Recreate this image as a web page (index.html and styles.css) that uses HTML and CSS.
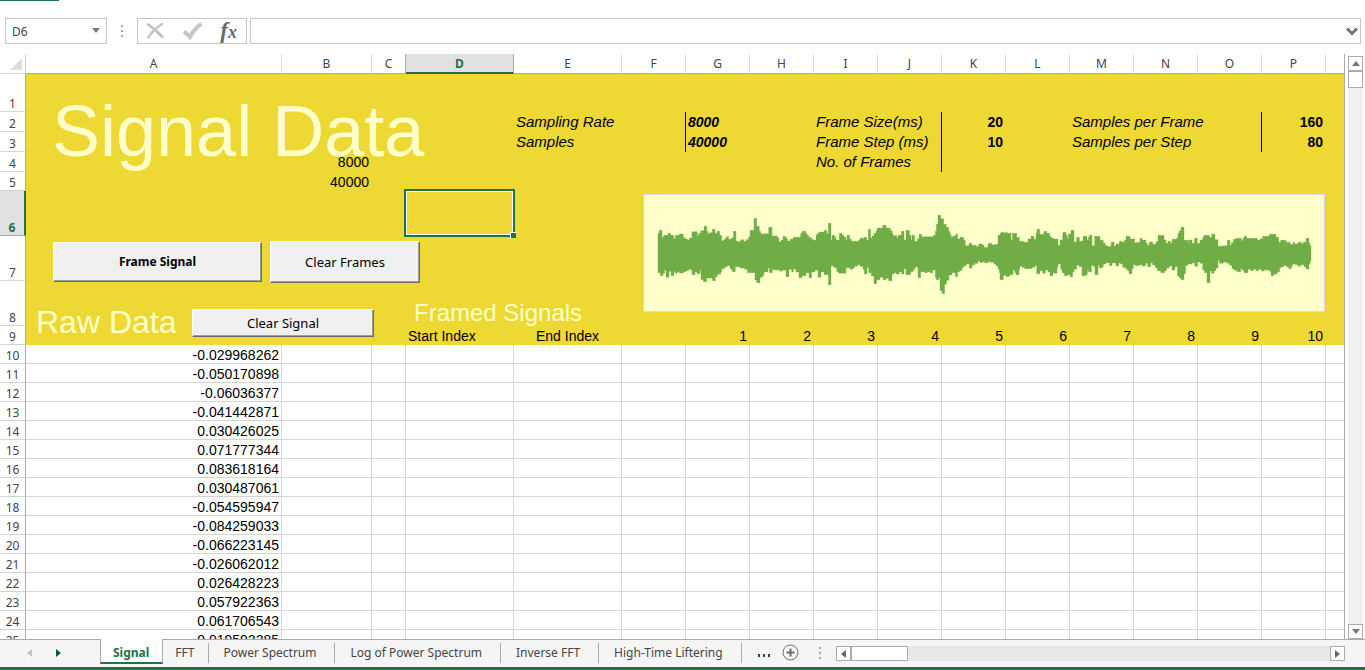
FILE: index.html
```html
<!DOCTYPE html>
<html lang="en">
<head>
<meta charset="utf-8">
<title>Signal Data</title>
<link rel="stylesheet" href="styles.css">
</head>
<body>
<div class="ribbon-edge"><span class="ribbon-tab"></span></div>

<header class="formula-bar">
  <div class="name-box">
    <input class="name-input" type="text" value="D6" aria-label="Name box">
    <button class="plain-btn" aria-label="Show names"><svg width="8" height="5" viewBox="0 0 8 5"><path d="M0 0h8L4 5z" fill="#777"/></svg></button>
  </div>
  <svg class="grip" width="2" height="12" viewBox="0 0 2 12" fill="#a6a6a6"><path d="M0 0h2v2H0zM0 5h2v2H0zM0 10h2v2H0z"/></svg>
  <div class="formula-tools">
    <button class="plain-btn" aria-label="Cancel"><svg width="20" height="20" viewBox="0 0 20 20" fill="none" stroke="#c3c3c3"><path d="M2 3C8 6 12 11 18 16.500" stroke-width="3"/><path d="M18 2.500C12 6 6 11 3 17.500" stroke-width="2.400"/></svg></button>
    <button class="plain-btn" aria-label="Enter"><svg width="20" height="20" viewBox="0 0 20 20" fill="none" stroke="#c6c6c6"><path d="M1 10.500L7 16C9.500 11 13.500 6 18.500 3" stroke-width="4"/></svg></button>
    <button class="plain-btn fx" aria-label="Insert function"><span class="fx-f">f</span><span class="fx-x">x</span></button>
  </div>
  <div class="formula-field">
    <input class="formula-input" type="text" aria-label="Formula">
    <button class="plain-btn" aria-label="Expand formula bar"><svg width="12" height="9" viewBox="0 0 12 9" fill="none" stroke="#737373" stroke-width="3"><path d="M1 1.500l5 5 5-5"/></svg></button>
  </div>
</header>

<main class="workspace">
  <div class="sheet">
    <table class="grid">
      <colgroup>
        <col class="w-head"><col class="w-a"><col class="w-b"><col class="w-c"><col class="w-de"><col class="w-de">
        <col class="w-n"><col class="w-n"><col class="w-n"><col class="w-n"><col class="w-n"><col class="w-n"><col class="w-n"><col class="w-n"><col class="w-n"><col class="w-n"><col class="w-n"><col>
      </colgroup>
      <thead>
        <tr><th class="corner"><svg width="12" height="12" viewBox="0 0 12 12"><path d="M12 0v12H0z" fill="#dedede"/></svg></th><th>A</th><th>B</th><th>C</th><th class="active">D</th><th>E</th><th>F</th><th>G</th><th>H</th><th>I</th><th>J</th><th>K</th><th>L</th><th>M</th><th>N</th><th>O</th><th>P</th><th class="last"></th></tr>
      </thead>
      <tbody class="panel">
        <tr class="r1"><th>1</th><td colspan="17"></td></tr>
        <tr class="r20"><th>2</th><td></td><td></td><td></td><td></td><td class="label">Sampling Rate</td><td class="rule"></td><td class="left strong label-num">8000</td><td></td><td class="label">Frame Size(ms)</td><td class="rule"></td><td class="strong">20</td><td></td><td class="label">Samples per Frame</td><td></td><td class="rule"></td><td class="strong">160</td><td></td></tr>
        <tr class="r20"><th>3</th><td></td><td></td><td></td><td></td><td class="label">Samples</td><td class="rule"></td><td class="left strong label-num">40000</td><td></td><td class="label">Frame Step (ms)</td><td class="rule"></td><td class="strong">10</td><td></td><td class="label">Samples per Step</td><td></td><td class="rule"></td><td class="strong">80</td><td></td></tr>
        <tr class="r20"><th>4</th><td></td><td>8000</td><td></td><td></td><td></td><td></td><td></td><td></td><td class="label">No. of Frames</td><td class="rule"></td><td></td><td></td><td></td><td></td><td></td><td></td><td></td></tr>
        <tr class="r19"><th>5</th><td></td><td>40000</td><td></td><td></td><td colspan="13"></td></tr>
        <tr class="r45"><th class="active">6</th><td></td><td></td><td></td><td class="selected"><span class="selection"><span class="handle"></span></span></td><td colspan="13"></td></tr>
        <tr class="r45"><th>7</th><td colspan="17"></td></tr>
        <tr class="r45"><th>8</th><td colspan="17"></td></tr>
        <tr class="r19"><th>9</th><td></td><td></td><td></td><td class="left">Start Index</td><td class="center">End Index</td><td></td><td>1</td><td>2</td><td>3</td><td>4</td><td>5</td><td>6</td><td>7</td><td>8</td><td>9</td><td>10</td><td></td></tr>
      </tbody>
      <tbody>
        <tr><th>10<td>-0.029968262<td><td><td><td><td><td><td><td><td><td><td><td><td><td><td></tr>
        <tr><th>11<td>-0.050170898<td><td><td><td><td><td><td><td><td><td><td><td><td><td><td></tr>
        <tr><th>12<td>-0.06036377<td><td><td><td><td><td><td><td><td><td><td><td><td><td><td></tr>
        <tr><th>13<td>-0.041442871<td><td><td><td><td><td><td><td><td><td><td><td><td><td><td></tr>
        <tr><th>14<td>0.030426025<td><td><td><td><td><td><td><td><td><td><td><td><td><td><td></tr>
        <tr><th>15<td>0.071777344<td><td><td><td><td><td><td><td><td><td><td><td><td><td><td></tr>
        <tr><th>16<td>0.083618164<td><td><td><td><td><td><td><td><td><td><td><td><td><td><td></tr>
        <tr><th>17<td>0.030487061<td><td><td><td><td><td><td><td><td><td><td><td><td><td><td></tr>
        <tr><th>18<td>-0.054595947<td><td><td><td><td><td><td><td><td><td><td><td><td><td><td></tr>
        <tr><th>19<td>-0.084259033<td><td><td><td><td><td><td><td><td><td><td><td><td><td><td></tr>
        <tr><th>20<td>-0.066223145<td><td><td><td><td><td><td><td><td><td><td><td><td><td><td></tr>
        <tr><th>21<td>-0.026062012<td><td><td><td><td><td><td><td><td><td><td><td><td><td><td></tr>
        <tr><th>22<td>0.026428223<td><td><td><td><td><td><td><td><td><td><td><td><td><td><td></tr>
        <tr><th>23<td>0.057922363<td><td><td><td><td><td><td><td><td><td><td><td><td><td><td></tr>
        <tr><th>24<td>0.061706543<td><td><td><td><td><td><td><td><td><td><td><td><td><td><td></tr>
        <tr><th>25<td>0.019592285<td><td><td><td><td><td><td><td><td><td><td><td><td><td><td></tr>
      </tbody>
    </table>

    <h1 class="shape title">Signal Data</h1>
    <h2 class="shape raw-title">Raw Data</h2>
    <h2 class="shape framed-title">Framed Signals</h2>
    <button class="shape macro frame-signal">Frame Signal</button>
    <button class="shape macro clear-frames">Clear Frames</button>
    <button class="shape macro clear-signal">Clear Signal</button>
    <svg class="shape chart" viewBox="9 12 2046 354" role="img" aria-label="Signal waveform">
      <rect x="10.500" y="13.500" width="2043" height="351" fill="#ffffcc" stroke="#d9d9d9" stroke-width="3"/>
      <g fill="#70ad47" stroke="#70ad47" stroke-width="1">
        <path d="M54 190V130H58V121H66V142H71V136H84V130H92V136H101V146H106V136H118V132H130V143H136V147H142V150H148V144H156V125H172V137H176V130H182V122H192V109H200V124H204V132H208V128H217V118H225V130H231V124H239V136H245V153H250V150H254V146H259V140H266V148H274V144H280V124H288V153H292V155H300V152H303V149H311V154H318V149H325V142H330V121H342V85H350V109H358V124H362V131H386V112H396V138H412V143H417V155H424V150H429V139H437V144H442V153H450V148H460V142H482V130H486V124H497V130H501V136H506V142H514V148H520V151H528V136H532V130H538V126H553V121H560V130H565V100H573V150H576V136H584V142H588V150H598V130H606V136H612V142H618V150H621V136H629V148H634V154H656V150H660V145H672V142H680V151H685V118H692V144H696V138H702V130H708V122H712V114H728V106H738V114H744V121H745V114H751V122H757V132H760V138H766V136H770V143H774V136H784V124H792V150H798V121H808V136H813V150H816V136H824V154H832V147H837V133H845V140H880V136H886V124H889V103H894V76H902V86H911V103H919V112H926V124H930V134H934V144H937V139H946V133H953V147H960V142H971V151H976V167H987V160H995V166H1008V169H1016V162H1026V167H1032V173H1044V162H1050V190
        V214H1044V218H1034V215H1026V217H1020V213H1014V220H1004V225H996V235H988V222H978V228H970V234H966V242H958V246H953V260H946V248H936V255H927V271H920V283H914V311H906V302H900V264H896V270H889V263H886V240H878V248H870V245H862V248H854V245H842V263H834V231H825V238H820V245H812V254H798V236H792V252H785V245H778V252H768V248H762V252H756V272H746V265H738V269H729V262H720V269H710V281H702V258H694V248H686V233H681V252H673V238H669V229H660V224H652V229H644V234H638V238H630V233H618V250H596V245H590V233H582V228H573V284H565V254H552V246H543V262H534V240H525V246H515V263H507V248H498V257H486V263H477V246H468V238H460V246H455V238H447V260H438V240H426V244H420V240H400V236H397V248H388V234H384V246H372V256H368V262H360V278H350V270H345V248H322V238H314V234H300V230H286V245H277V240H274V236H270V227H261V231H254V236H245V246H242V253H232V260H226V272H217V264H200V275H190V269H183V240H180V251H171V246H165V254H156V240H152V238H146V242H138V245H130V249H118V246H112V250H106V244H102V257H93V244H87V262H78V240H74V250H69V257H61V248H54Z"/>
        <path transform="translate(1020 0)" d="M0 190V162H8V166H12V173H24V168H27V160H35V164H50V162H54V136H60V130H64V127H72V130H76V127H82V130H93V150H97V130H110V142H118V154H130V157H144V147H153V139H162V148H168V130H171V118H179V133H192V124H200V130H209V139H213V144H221V147H234V166H240V150H248V136H249V127H258V136H262V146H265V132H273V121H282V156H290V142H298V154H309V139H321V150H325V142H328V136H336V167H344V139H360V151H370V160H376V167H384V170H392V166H394V156H402V168H408V162H418V154H426V157H433V150H438V139H450V147H464V159H470V157H480V145H486V150H498V160H502V166H508V156H518V163H528V155H534V136H552V150H558V160H564V154H572V160H576V148H590V144H594V130H598V122H603V112H612V151H624V160H626V150H636V160H643V145H652V160H660V150H668V142H672V136H688V142H695V133H705V149H714V169H728V167H742V151H750V166H754V158H760V148H768V145H784V152H788V146H792V139H800V145H832V150H840V146H848V139H868V133H888V142H896V157H902V151H918V157H930V163H940V156H944V162H954V157H964V161H970V156H978V145H987V160H990V168H993V190
        V214H990V222H987V237H978V230H972V224H962V229H954V224H946V222H938V229H934V236H926V230H918V226H912V230H904V233H899V245H892V252H882V257H873V244H868V240H852V243H844V238H836V242H828V238H820V242H812V238H804V248H792V240H786V236H782V245H770V240H762V236H756V226H748V220H740V216H730V220H718V211H714V234H708V242H702V250H694V242H690V278H681V248H673V240H668V220H660V216H653V229H644V219H636V222H624V226H617V251H612V269H603V264H598V258H592V230H585V240H576V228H568V234H560V242H554V248H542V242H532V234H526V225H518V218H512V230H503V220H497V228H486V224H478V227H466V224H460V236H456V251H447V242H442V236H436V232H428V222H422V219H416V228H408V219H396V227H388V218H378V222H370V230H366V234H358V226H354V254H345V230H340V226H334V246H326V240H322V254H318V257H306V230H298V226H290V238H282V246H278V260H270V254H262V257H253V248H246V238H242V222H234V232H231V250H222V248H219V257H210V246H204V240H196V250H188V242H180V251H170V226H165V232H156V236H134V232H126V228H120V238H117V254H108V248H104V240H99V254H90V257H86V260H78V256H70V269H60V248H58V238H54V228H48V222H42V217H30V214H24V218H16V214H8V217H0Z"/>
      </g>
    </svg>
  </div>

  <div class="vscroll">
    <button class="scroll-btn" aria-label="Scroll up"><svg width="8" height="5" viewBox="0 0 8 5"><path d="M0 5h8L4 0z" fill="#777"/></svg></button>
    <div class="vthumb"></div>
    <button class="scroll-btn end" aria-label="Scroll down"><svg width="8" height="5" viewBox="0 0 8 5"><path d="M0 0h8L4 5z" fill="#777"/></svg></button>
  </div>
</main>

<footer class="tab-bar">
  <div class="tab-nav">
    <button class="plain-btn" aria-label="Previous sheets"><svg width="5" height="8" viewBox="0 0 5 8"><path d="M5 0v8L0 4z" fill="#c3c3c3"/></svg></button>
    <button class="plain-btn" aria-label="Next sheets"><svg width="5" height="8" viewBox="0 0 5 8"><path d="M0 0v8l5-4z" fill="#0f5c2e"/></svg></button>
  </div>
  <nav class="tabs" aria-label="Sheets">
    <button class="tab current">Signal</button>
    <button class="tab short">FFT</button>
    <button class="tab">Power Spectrum</button>
    <button class="tab">Log of Power Spectrum</button>
    <button class="tab">Inverse FFT</button>
    <button class="tab">High-Time Liftering</button>
  </nav>
  <button class="plain-btn more" aria-label="More sheets"><svg width="12" height="3" viewBox="0 0 12 3" fill="#0f5c2e"><path d="M0 0h2v3H0zM5 0h2v3H5zM10 0h2v3h-2z"/></svg></button>
  <button class="plain-btn add" aria-label="New sheet"><svg width="17" height="17" viewBox="0 0 17 17" fill="none" stroke="#6d6d6d"><circle cx="8.500" cy="8.500" r="7.500"/><path d="M8.500 4.500v8M4.500 8.500h8" stroke-width="2"/></svg></button>
  <svg class="grip-end" width="2" height="12" viewBox="0 0 2 12" fill="#a6a6a6"><path d="M0 0h2v2H0zM0 5h2v2H0zM0 10h2v2H0z"/></svg>
  <div class="hscroll">
    <button class="scroll-btn" aria-label="Scroll left"><svg width="5" height="8" viewBox="0 0 5 8"><path d="M5 0v8L0 4z" fill="#666"/></svg></button>
    <div class="hthumb"></div>
    <button class="scroll-btn end" aria-label="Scroll right"><svg width="5" height="8" viewBox="0 0 5 8"><path d="M0 0v8l5-4z" fill="#666"/></svg></button>
  </div>
</footer>
<div class="status-edge"></div>
</body>
</html>
```
FILE: styles.css
```css
* { box-sizing: border-box; }

body {
  margin: 0;
  height: 100vh;
  display: flex;
  flex-direction: column;
  overflow: hidden;
  background: #fff;
  color: #444;
  font: 12px/17px "Noto Sans", "Open Sans", sans-serif;
}

button, input { font: inherit; color: inherit; }
svg { display: block; }

.plain-btn {
  display: flex;
  align-items: center;
  justify-content: center;
  padding: 0;
  border: 0;
  background: none;
}

/* Ribbon edge and formula bar */
.ribbon-edge { flex: none; height: 18px; }
.ribbon-tab { display: block; width: 59px; height: 1px; background: #217346; }

.formula-bar {
  flex: none;
  display: flex;
  align-items: center;
  height: 26px;
  padding: 0 4px 0 5px;
  margin-bottom: 10px;
}
.name-box, .formula-tools, .formula-field {
  display: flex;
  align-items: center;
  height: 26px;
  border: 1px solid #c6c6c6;
}
.name-box { width: 102px; padding: 0 6px; }
.name-input, .formula-input {
  flex: 1;
  min-width: 0;
  padding: 0;
  border: 0;
  outline: 0;
  background: none;
}
.name-box .plain-btn { margin-bottom: 2px; }
.grip { margin: 0 14px; }
.formula-tools { width: 110px; justify-content: space-between; padding: 0 9px 0 7px; margin-right: 3px; }
.formula-field { flex: 1; padding-right: 2px; }
.fx {
  align-items: baseline;
  color: #6a6a6a;
  font: italic bold 23px/24px "Liberation Serif", serif;
}
.fx-x { font-size: 18px; }

/* Worksheet */
.workspace { flex: 1; min-height: 0; display: flex; }
.sheet { position: relative; flex: 1; min-width: 0; overflow: hidden; border-right: 1px solid #ababab; }

.grid { width: 100%; table-layout: fixed; border-collapse: separate; border-spacing: 0; }
.w-head { width: 26px; }
.w-a { width: 256px; }
.w-b { width: 90px; }
.w-c { width: 34px; }
.w-de { width: 108px; }
.w-n { width: 64px; }

.grid th { padding: 0; font-weight: 400; text-align: center; vertical-align: bottom; }
.grid thead th {
  height: 20px;
  padding-bottom: 1px;
  border-bottom: 1px solid #ababab;
  border-right: 1px solid #dcdcdc;
}
.grid thead .corner { padding: 0 3px 3px 0; border-right-color: #d0d0d0; border-bottom-color: #d4d4d4; }
.corner svg { margin-left: auto; }
.grid thead .last { border-right: 0; }
.grid thead .active {
  padding-bottom: 0;
  background: #e1e1e1;
  border-bottom: 2px solid #217346;
  border-right-color: #ababab;
  box-shadow: -1px 0 #ababab;
  color: #217346;
  font-weight: 700;
}
.grid tbody th { border-right: 1px solid #ababab; border-bottom: 1px solid #d4d4d4; line-height: 15px; }
.grid tbody .active {
  background: #e1e1e1;
  border-right: 2px solid #217346;
  border-bottom-color: #ababab;
  color: #217346;
  font-weight: 700;
}
.grid td {
  height: 19px;
  padding: 0 2px;
  border-right: 1px solid #d4d4d4;
  border-bottom: 1px solid #d4d4d4;
  color: #000;
  font: 14px/16px "Liberation Sans", Arial, sans-serif;
  text-align: right;
  vertical-align: bottom;
  white-space: nowrap;
}
.grid tbody tr::after { content: ""; display: table-cell; border-bottom: 1px solid #d4d4d4; }
.panel td { background: #edd834; border-color: #edd834; }
.grid .panel tr::after { display: none; }
.panel td:last-child { border-right: 0; }
.panel .r1 td { height: 38px; }
.panel .r20 td { height: 20px; padding-bottom: 1px; }
.panel .r45 td { height: 45px; }
.panel .label { position: relative; font-size: 15px; font-style: italic; text-align: left; }
.panel .left { text-align: left; }
.panel .center { text-align: center; }
.panel .strong { font-weight: 700; }
.panel .label-num { font-style: italic; }
.panel .rule { border-right-color: #000; border-bottom: 0; }

.selected { position: relative; }
.selection {
  position: absolute;
  z-index: 1;
  inset: -2px;
  border: 2px solid #217346;
  box-shadow: inset 0 0 0 1px #fff;
}
.handle {
  position: absolute;
  right: -4px;
  bottom: -4px;
  width: 7px;
  height: 7px;
  border: 1px solid #edd834;
  background: #217346;
  border-top-color: #fff;
  border-left-color: #fff;
}

/* Objects floating above the cells */
.shape { position: absolute; margin: 0; white-space: nowrap; }
.title, .raw-title, .framed-title {
  color: #ffffcc;
  font-family: "Liberation Sans", Arial, sans-serif;
  font-weight: 400;
}
.title { left: 52px; top: 37px; font-size: 72px; line-height: 80px; }
.raw-title { left: 36px; top: 250px; font-size: 32px; line-height: 36px; }
.framed-title { left: 414px; top: 245px; font-size: 24px; line-height: 28px; }

.macro {
  padding: 0;
  border: 1px solid;
  border-color: #fff #696969 #696969 #fff;
  box-shadow: inset -1px -1px #a0a0a0;
  background: #f0f0f0;
  color: #000;
  font-size: 13px;
  line-height: 18px;
}
.frame-signal { left: 53px; top: 188px; width: 209px; height: 40px; font-size: 12px; font-weight: 700; }
.clear-frames { left: 270px; top: 187px; width: 150px; height: 42px; }
.clear-signal { left: 192px; top: 255px; width: 182px; height: 28px; }
.chart { left: 643px; top: 140px; width: 682px; height: 118px; }

/* Scroll bars */
.scroll-btn {
  flex: none;
  display: flex;
  align-items: center;
  justify-content: center;
  width: 15px;
  height: 15px;
  padding: 0;
  border: 1px solid #ababab;
  background: #fff;
}
.vscroll {
  flex: none;
  display: flex;
  flex-direction: column;
  width: 15px;
  margin: 2px 2px 0 3px;
  background: #f1f1f1;
}
.vthumb { height: 17px; border: 1px solid #ababab; background: #fff; }
.end { margin-top: auto; }

/* Sheet tabs */
.tab-bar {
  flex: none;
  display: flex;
  height: 28px;
  background: #f5f5f5;
  box-shadow: inset 0 1px #ababab;
}
.tab-nav { flex: none; display: flex; width: 100px; height: 27px; padding-left: 27px; gap: 24px; }
.tabs { display: flex; align-items: flex-start; }
.tab {
  height: 20px;
  margin-top: 4px;
  padding: 0 18px 0 15px;
  border: 0;
  border-right: 1px solid #ababab;
  background: none;
  line-height: 20px;
  white-space: nowrap;
}
.tab.short { padding: 0 13px 0 12px; }
.tab.current {
  height: 25px;
  margin-top: 0;
  padding: 4px 13px 0 12px;
  border-left: 1px solid #ababab;
  border-bottom: 2px solid #217346;
  background: #fff;
  color: #217346;
  font-weight: 700;
}
.more { margin: 15px 0 0 16px; height: 3px; }
.add { margin: 5px 0 0 12px; height: 17px; }
.grip-end { margin: 8px 0 0 20px; }
.hscroll {
  flex: 1;
  display: flex;
  height: 15px;
  margin: 7px 20px 0 15px;
  background: #e8e8e8;
}
.hthumb { width: 57px; border: 1px solid #ababab; background: #fff; }
.hscroll .end { margin: 0 0 0 auto; }

.status-edge { flex: none; height: 3px; background: #217346; }
```
